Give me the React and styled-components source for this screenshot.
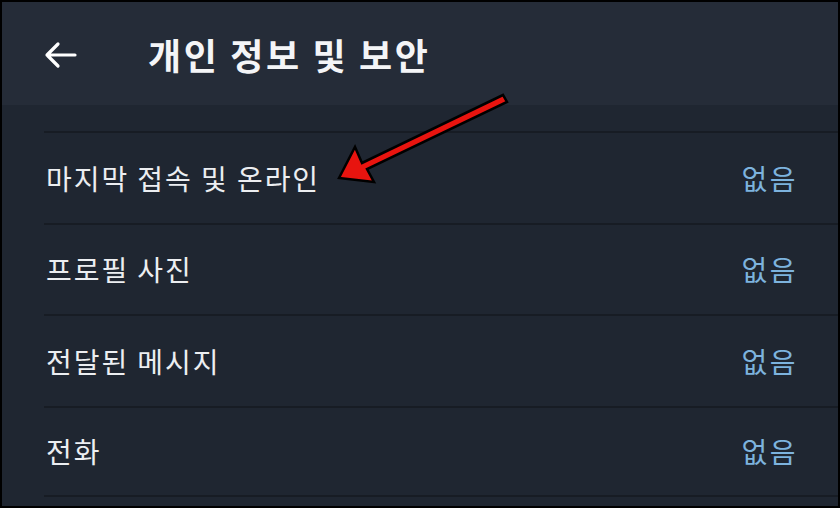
import React from "react";
import styled, { createGlobalStyle } from "styled-components";

const GlobalStyle = createGlobalStyle`
  html, body {
    margin: 0;
    padding: 0;
    background: #000;
  }
  body {
    font-family: "Noto Sans CJK KR", "Noto Sans", sans-serif;
  }
`;

// 전체 화면 프레임
const Frame = styled.div`
  position: relative;
  width: 840px;
  height: 508px;
  box-sizing: border-box;
  border: 2px solid #000;
  background: #1f2631;
  overflow: hidden;
`;

// 상단 헤더
const Header = styled.header`
  height: 103px;
  background: #252c38;
  display: flex;
  align-items: center;
  padding-left: 41px;
  box-sizing: border-box;
`;

const BackButton = styled.div`
  width: 34px;
  height: 30px;
  display: flex;
  align-items: center;
  justify-content: center;
  margin-right: 71px;
  margin-top: 2px;
`;

const Title = styled.h1`
  margin: 0;
  font-size: 36px;
  font-weight: 700;
  color: #f4f5f7;
  letter-spacing: 2.6px;
`;

// 목록
const List = styled.ul`
  list-style: none;
  margin: 26px 0 0 42px;
  padding: 0;
`;

const Row = styled.li`
  height: 91.5px;
  display: flex;
  align-items: center;
  justify-content: space-between;
  border-top: 2px solid #171c24;
  padding-right: 42px;
  box-sizing: border-box;
  &:last-child {
    border-bottom: 2px solid #171c24;
  }
`;

const Label = styled.span`
  font-size: 28px;
  color: #eceef1;
  margin-left: 2px;
  letter-spacing: 1.95px;
`;

const Value = styled.span`
  font-size: 28px;
  color: #7db3de;
  letter-spacing: 2.5px;
  margin-right: -2px;
`;

// 빨간 화살표 (주석 표시)
const Pointer = styled.svg`
  position: absolute;
  left: 330px;
  top: 85px;
  overflow: visible;
`;

const rows = [
  { label: "마지막 접속 및 온라인", value: "없음" },
  { label: "프로필 사진", value: "없음" },
  { label: "전달된 메시지", value: "없음" },
  { label: "전화", value: "없음" },
];

export default function App() {
  return (
    <>
      <GlobalStyle />
      <Frame>
        <Header>
          <BackButton>
            <svg width="34" height="28" viewBox="0 0 34 28" fill="none">
              <path
                d="M32 14H4M15 3L4 14l11 11"
                stroke="#fff"
                strokeWidth="3.2"
                strokeLinecap="round"
                strokeLinejoin="round"
              />
            </svg>
          </BackButton>
          <Title>개인 정보 및 보안</Title>
        </Header>
        <List>
          {rows.map((r) => (
            <Row key={r.label}>
              <Label>{r.label}</Label>
              <Value>{r.value}</Value>
            </Row>
          ))}
        </List>
        <Pointer width="190" height="110" viewBox="0 0 190 110">
          <path
            d="M7 91 L23 60 L30 76 L171 8 L175 15 L35 82 L42 95 Z"
            fill="#e8140f"
            stroke="#000"
            strokeWidth="2.5"
            strokeLinejoin="miter"
          />
        </Pointer>
      </Frame>
    </>
  );
}
